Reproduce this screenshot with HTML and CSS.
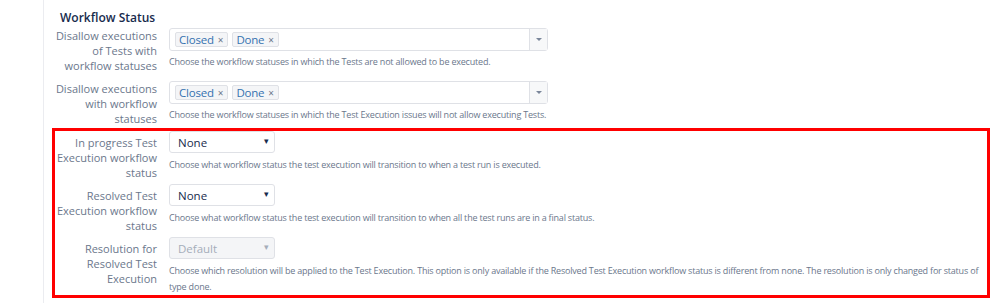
FILE: index.html
```html
<!DOCTYPE html>
<html lang="en">
<head>
    <meta charset="UTF-8">
    <title>Workflow Status</title>
    <link rel="stylesheet" href="styles.css">
</head>
<body>
    <div class="page">
        <div class="panel">
            <h2 class="section-title">Workflow Status</h2>

            <div class="group">
                <div class="row multi">
                    <label class="label">Disallow executions of Tests with workflow statuses</label>
                    <div class="field">
                        <div class="multi-select">
                            <div class="tags">
                                <span class="tag">Closed <span class="x">&times;</span></span>
                                <span class="tag">Done <span class="x">&times;</span></span>
                            </div>
                            <div class="drop"><span class="caret"></span></div>
                        </div>
                        <div class="desc">Choose the workflow statuses in which the Tests are not allowed to be executed.</div>
                    </div>
                </div>

                <div class="row multi">
                    <label class="label">Disallow executions with workflow statuses</label>
                    <div class="field">
                        <div class="multi-select">
                            <div class="tags">
                                <span class="tag">Closed <span class="x">&times;</span></span>
                                <span class="tag">Done <span class="x">&times;</span></span>
                            </div>
                            <div class="drop"><span class="caret"></span></div>
                        </div>
                        <div class="desc">Choose the workflow statuses in which the Test Execution issues will not allow executing Tests.</div>
                    </div>
                </div>
            </div>

            <div class="group highlight">
                <div class="row single">
                    <label class="label">In progress Test Execution workflow status</label>
                    <div class="field">
                        <div class="select">None <span class="arrow">&#9662;</span></div>
                        <div class="desc">Choose what workflow status the test execution will transition to when a test run is executed.</div>
                    </div>
                </div>

                <div class="row single">
                    <label class="label">Resolved Test Execution workflow status</label>
                    <div class="field">
                        <div class="select">None <span class="arrow">&#9662;</span></div>
                        <div class="desc">Choose what workflow status the test execution will transition to when all the test runs are in a final status.</div>
                    </div>
                </div>

                <div class="row single">
                    <label class="label">Resolution for Resolved Test Execution</label>
                    <div class="field">
                        <div class="select disabled">Default <span class="arrow">&#9662;</span></div>
                        <div class="desc">Choose which resolution will be applied to the Test Execution. This option is only available if the Resolved Test Execution workflow status is different from none. The resolution is only changed for status of type done.</div>
                    </div>
                </div>
            </div>
        </div>
    </div>
</body>
</html>
```

FILE: styles.css
```css
body {
    margin: 0;
    background: #ffffff;
    font-family: 'Open Sans', 'Noto Sans', sans-serif;
    color: #172b4d;
}

.page {
    padding-left: 43px;
    height: 303px;
    overflow: hidden;
}

.panel {
    border-left: 1px solid #ebecf0;
    height: 100%;
    padding-top: 9px;
}

.section-title {
    margin: 0 0 0 16px;
    font-size: 12px;
    font-weight: 600;
    line-height: 18px;
    color: #172b4d;
}

.group {
    margin-left: 11px;
    width: 932px;
    display: flex;
    flex-direction: column;
    gap: 8px;
    padding-top: 1px;
}

.highlight {
    margin-left: 8px;
    width: 932px;
    margin-top: 2px;
    border: 3px solid #ff0000;
    padding-top: 0;
    gap: 4px;
}

.row {
    display: grid;
    grid-template-columns: 102px 1fr;
    column-gap: 12px;
}

.label {
    text-align: right;
    font-size: 11px;
    line-height: 15px;
    color: #6b778c;
}

.single .label {
    padding-top: 4px;
}

.multi-select {
    display: flex;
    width: 377px;
    height: 21px;
    border: 1px solid #dfe1e6;
    border-radius: 3px;
    background: #ffffff;
}

.tags {
    flex: 1;
    display: flex;
    align-items: center;
    gap: 4px;
    padding-left: 5px;
}

.tag {
    display: inline-flex;
    align-items: center;
    height: 13px;
    padding: 0 4px 0 3px;
    border: 1px solid #dfe1e6;
    border-radius: 2px;
    background: #f4f5f7;
    font-size: 11.5px;
    letter-spacing: -0.2px;
    color: #3572b0;
}

.tag .x {
    margin-left: 4px;
    font-size: 10px;
    color: #6b778c;
}

.drop {
    width: 17px;
    border-left: 1px solid #dfe1e6;
    background: #f7f8f9;
    display: flex;
    align-items: center;
    justify-content: center;
}

.caret {
    width: 0;
    height: 0;
    border-left: 3px solid transparent;
    border-right: 3px solid transparent;
    border-top: 3px solid #7a869a;
}

.select {
    position: relative;
    width: 96px;
    height: 20px;
    padding-left: 8px;
    border: 1px solid #dfe1e6;
    border-radius: 3px;
    background: #ffffff;
    font-size: 11.5px;
    line-height: 22px;
    color: #172b4d;
}

.select .arrow {
    position: absolute;
    right: 5px;
    top: -2px;
    font-size: 9px;
    color: #172b4d;
}

.select.disabled {
    background: #f4f5f7;
    color: #a5adba;
}

.select.disabled .arrow {
    color: #a5adba;
}

.desc {
    margin-top: 3px;
    font-size: 9px;
    letter-spacing: -0.2px;
    line-height: 16px;
    color: #6b778c;
}

.single .desc {
    margin-top: 4px;
}
```
